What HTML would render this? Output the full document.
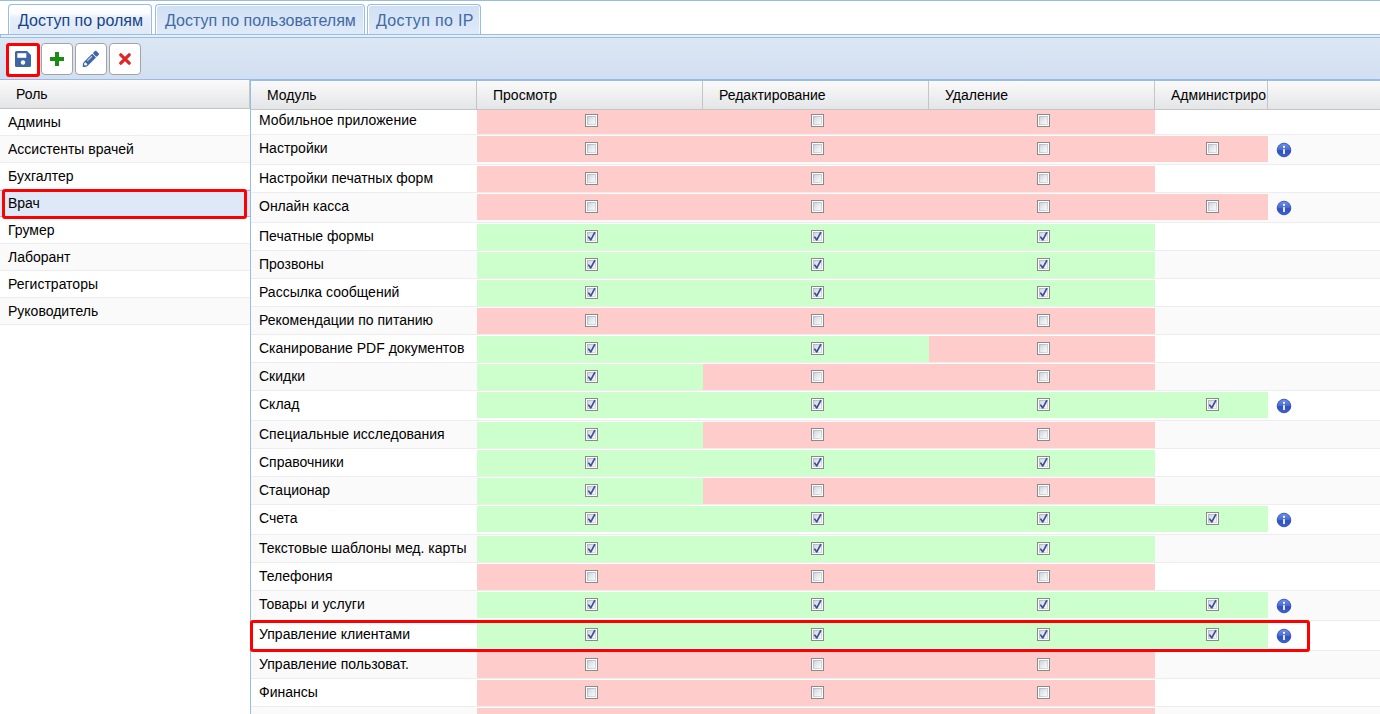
<!DOCTYPE html>
<html><head><meta charset="utf-8"><style>
*{box-sizing:border-box}
html,body{margin:0;padding:0;width:1380px;height:714px;overflow:hidden;background:#fff;font-family:"Liberation Sans",sans-serif;}
.a{position:absolute}
.t{position:absolute;font-size:14px;line-height:16px;color:#000;white-space:nowrap}
.tab{position:absolute;top:4px;height:31px;border:1px solid #99bbe8;border-bottom:none;border-radius:4px 4px 0 0;background:linear-gradient(#cfdff5,#e0ebf9);box-shadow:inset 1px 1px 0 #fff,inset -1px 0 0 #f4f8fd}
.tab.act{background:linear-gradient(#ffffff 0,#fbfcfe 8px,#e6eef9 13px,#dfe9f7 100%)}
.tabt{position:absolute;top:0;font-size:16px;line-height:18px;white-space:nowrap;color:#416aa3}
.btn{position:absolute;top:43px;width:32px;height:32px;border:1px solid #a3a3a3;border-radius:4px;background:#fff}
.hd{position:absolute;background:linear-gradient(#fafafa,#e4e5e7)}
.sep{position:absolute;width:1px;background:#c5c5c5}
.row{position:absolute;border-bottom:1px solid #ededed}
.alt{background:#fafafa}
.cell{position:absolute}
.r{background:#ffcccc}
.g{background:#ccffcc}
.cb{position:absolute;width:13px;height:13px}
.cb svg{display:block}
.ic{position:absolute;width:16px;height:16px}
.ic svg{display:block}
</style></head><body>
<svg width="0" height="0" style="position:absolute"><defs>
<linearGradient id="cbs" x1="0" y1="0" x2="1" y2="1"><stop offset="0" stop-color="#b4bac4"/><stop offset="1" stop-color="#dcdfe3"/></linearGradient>
<linearGradient id="cbg" x1="0" y1="0" x2="1" y2="1"><stop offset="0" stop-color="#cdd3dc"/><stop offset="0.6" stop-color="#eceef0"/><stop offset="1" stop-color="#f8f8f8"/></linearGradient>
<linearGradient id="ig" x1="0" y1="0" x2="0" y2="1"><stop offset="0" stop-color="#6f8fe8"/><stop offset="0.45" stop-color="#4a6fd8"/><stop offset="0.55" stop-color="#2f52c4"/><stop offset="1" stop-color="#3a62d8"/></linearGradient>
</defs></svg>

<div class="a" style="left:0;top:0;width:1380px;height:1px;background:#99bbe8"></div>
<div class="tab act" style="left:8px;width:144px"><div class="tabt" style="left:9px;top:7px;color:#15428b">Доступ по ролям</div></div>
<div class="tab" style="left:155px;width:210px"><div class="tabt" style="left:9px;top:7px">Доступ по пользователям</div></div>
<div class="tab" style="left:367px;width:114px"><div class="tabt" style="left:8px;top:7px;letter-spacing:0.35px">Доступ по IP</div></div>
<div class="a" style="left:0;top:34px;width:1380px;height:4px;background:#e7f0fb;border-top:1px solid #99bbe8;border-bottom:1px solid #99bbe8;border-left:1px solid #99bbe8"></div>
<div class="a" style="left:0;top:38px;width:1380px;height:41px;background:linear-gradient(#dce7f5,#d2dff0)"></div>
<div class="a" style="left:0;top:79px;width:1380px;height:1px;background:#99bbe8"></div>
<div class="btn" style="left:7px"></div>
<div class="btn" style="left:41px"></div>
<div class="btn" style="left:75px"></div>
<div class="btn" style="left:109px"></div>
<svg class="a" style="left:15px;top:51px" width="16" height="16" viewBox="0 0 16 16"><path d="M1.5 0 H12 L16 4 V14.5 A1.5 1.5 0 0 1 14.5 16 H1.5 A1.5 1.5 0 0 1 0 14.5 V1.5 A1.5 1.5 0 0 1 1.5 0Z" fill="#3e65a6"/><rect x="2.3" y="2.2" width="9" height="4.6" fill="#fff"/><circle cx="8" cy="11.5" r="2.2" fill="#fff"/></svg>
<svg class="a" style="left:50px;top:52px" width="14" height="14" viewBox="0 0 14 14"><rect x="5" y="0" width="4" height="14" fill="#1b8c14"/><rect x="0" y="5" width="14" height="4" fill="#1b8c14"/></svg>
<svg class="a" style="left:83px;top:51px;overflow:visible" width="16" height="16" viewBox="0 0 16 16"><g transform="rotate(-45 8 8)"><path d="M-3.4 7.75 Q-1.2 5.0 0.9 5.0 H12.6 V10.5 H0.9 Q-1.2 10.5 -3.4 7.75Z" fill="#3e65a6"/><path d="M13.3 6.2 A1.1 1.1 0 0 1 14.4 5.1 H16.3 A1.1 1.1 0 0 1 17.4 6.2 V9.4 A1.1 1.1 0 0 1 16.3 10.5 H14.4 A1.1 1.1 0 0 1 13.3 9.4Z" fill="#3e65a6"/><rect x="4" y="6.15" width="6.6" height="1.1" fill="#c9d5ea"/><path d="M-1.3 7.7 L0.1 6.3 H1.7 V9.2 H0.1 Z" fill="#fff"/></g></svg>
<svg class="a" style="left:119px;top:53px" width="12" height="12" viewBox="0 0 12 12"><path d="M1.8 1.8 L10.2 10.2 M10.2 1.8 L1.8 10.2" stroke="#e02323" stroke-width="3.2" stroke-linecap="round"/></svg>
<div class="a" style="left:6px;top:43px;width:34px;height:34px;border:3px solid #ff0000;border-radius:3px"></div>
<div class="hd" style="left:0;top:80px;width:249px;height:28px"></div>
<div class="a" style="left:0;top:108px;width:250px;height:1px;background:#c5c5c5"></div>
<div class="a" style="left:249px;top:80px;width:1px;height:28px;background:#c5c5c5"></div>
<div class="t" style="left:16px;top:86px">Роль</div>
<div class="row" style="left:0;top:109px;width:250px;height:27px;"></div>
<div class="t" style="left:8px;top:114px">Админы</div>
<div class="row alt" style="left:0;top:136px;width:250px;height:27px;"></div>
<div class="t" style="left:8px;top:141px">Ассистенты врачей</div>
<div class="row" style="left:0;top:163px;width:250px;height:27px;"></div>
<div class="t" style="left:8px;top:168px">Бухгалтер</div>
<div class="row alt" style="left:0;top:190px;width:250px;height:27px;background:#dfe8f6;border-top:1px solid #99bbe8;border-bottom:1px solid #99bbe8;"></div>
<div class="t" style="left:8px;top:195px">Врач</div>
<div class="row" style="left:0;top:217px;width:250px;height:27px;"></div>
<div class="t" style="left:8px;top:222px">Грумер</div>
<div class="row alt" style="left:0;top:244px;width:250px;height:27px;"></div>
<div class="t" style="left:8px;top:249px">Лаборант</div>
<div class="row" style="left:0;top:271px;width:250px;height:27px;"></div>
<div class="t" style="left:8px;top:276px">Регистраторы</div>
<div class="row alt" style="left:0;top:298px;width:250px;height:27px;"></div>
<div class="t" style="left:8px;top:303px">Руководитель</div>
<div class="a" style="left:2px;top:189px;width:245px;height:30px;border:3px solid #ff0000;border-radius:3px"></div>
<div class="a" style="left:250px;top:79px;width:1px;height:635px;background:#99bbe8"></div>
<div class="a" style="left:250px;top:80px;width:1130px;height:1px;background:#99bbe8"></div>
<div class="hd" style="left:251px;top:81px;width:1129px;height:28px"></div>
<div class="a" style="left:251px;top:109px;width:1129px;height:1px;background:#c5c5c5"></div>
<div class="sep" style="left:476px;top:81px;height:28px"></div>
<div class="sep" style="left:702px;top:81px;height:28px"></div>
<div class="sep" style="left:928px;top:81px;height:28px"></div>
<div class="sep" style="left:1154px;top:81px;height:28px"></div>
<div class="sep" style="left:1267px;top:81px;height:28px"></div>
<div class="t" style="left:267px;top:87px">Модуль</div>
<div class="t" style="left:493px;top:87px">Просмотр</div>
<div class="t" style="left:719px;top:87px">Редактирование</div>
<div class="t" style="left:945px;top:87px">Удаление</div>
<div class="t" style="left:1171px;top:87px;width:96px;overflow:hidden">Администриро</div>
<div class="row" style="left:251px;top:110px;width:1129px;height:25px"></div>
<div class="cell r" style="left:477px;top:110px;width:226px;height:24px"></div>
<div class="cb" style="left:585px;top:114px"><svg width="13" height="13" viewBox="0 0 13 13"><rect x="0.5" y="0.5" width="12" height="12" fill="#fff" stroke="#8a8a8a"/><rect x="2.5" y="2.5" width="8" height="8" fill="url(#cbg)" stroke="url(#cbs)" stroke-width="1"/></svg></div>
<div class="cell r" style="left:703px;top:110px;width:226px;height:24px"></div>
<div class="cb" style="left:811px;top:114px"><svg width="13" height="13" viewBox="0 0 13 13"><rect x="0.5" y="0.5" width="12" height="12" fill="#fff" stroke="#8a8a8a"/><rect x="2.5" y="2.5" width="8" height="8" fill="url(#cbg)" stroke="url(#cbs)" stroke-width="1"/></svg></div>
<div class="cell r" style="left:929px;top:110px;width:226px;height:24px"></div>
<div class="cb" style="left:1037px;top:114px"><svg width="13" height="13" viewBox="0 0 13 13"><rect x="0.5" y="0.5" width="12" height="12" fill="#fff" stroke="#8a8a8a"/><rect x="2.5" y="2.5" width="8" height="8" fill="url(#cbg)" stroke="url(#cbs)" stroke-width="1"/></svg></div>
<div class="t" style="left:259px;top:112px">Мобильное приложение</div>
<div class="row alt" style="left:251px;top:135px;width:1129px;height:30px"></div>
<div class="cell r" style="left:477px;top:136px;width:226px;height:26px"></div>
<div class="cb" style="left:585px;top:142px"><svg width="13" height="13" viewBox="0 0 13 13"><rect x="0.5" y="0.5" width="12" height="12" fill="#fff" stroke="#8a8a8a"/><rect x="2.5" y="2.5" width="8" height="8" fill="url(#cbg)" stroke="url(#cbs)" stroke-width="1"/></svg></div>
<div class="cell r" style="left:703px;top:136px;width:226px;height:26px"></div>
<div class="cb" style="left:811px;top:142px"><svg width="13" height="13" viewBox="0 0 13 13"><rect x="0.5" y="0.5" width="12" height="12" fill="#fff" stroke="#8a8a8a"/><rect x="2.5" y="2.5" width="8" height="8" fill="url(#cbg)" stroke="url(#cbs)" stroke-width="1"/></svg></div>
<div class="cell r" style="left:929px;top:136px;width:226px;height:26px"></div>
<div class="cb" style="left:1037px;top:142px"><svg width="13" height="13" viewBox="0 0 13 13"><rect x="0.5" y="0.5" width="12" height="12" fill="#fff" stroke="#8a8a8a"/><rect x="2.5" y="2.5" width="8" height="8" fill="url(#cbg)" stroke="url(#cbs)" stroke-width="1"/></svg></div>
<div class="cell r" style="left:1155px;top:136px;width:113px;height:26px"></div>
<div class="cb" style="left:1206px;top:142px"><svg width="13" height="13" viewBox="0 0 13 13"><rect x="0.5" y="0.5" width="12" height="12" fill="#fff" stroke="#8a8a8a"/><rect x="2.5" y="2.5" width="8" height="8" fill="url(#cbg)" stroke="url(#cbs)" stroke-width="1"/></svg></div>
<div class="t" style="left:259px;top:140px">Настройки</div>
<div class="ic" style="left:1276px;top:142px"><svg width="16" height="16" viewBox="0 0 16 16"><circle cx="8" cy="8" r="6.8" fill="url(#ig)" stroke="#2841a6" stroke-width="0.8"/><rect x="7" y="3.9" width="2" height="1.9" fill="#fff"/><rect x="7" y="7.1" width="2" height="4.9" fill="#ebe6da"/></svg></div>
<div class="row" style="left:251px;top:165px;width:1129px;height:28px"></div>
<div class="cell r" style="left:477px;top:166px;width:226px;height:26px"></div>
<div class="cb" style="left:585px;top:172px"><svg width="13" height="13" viewBox="0 0 13 13"><rect x="0.5" y="0.5" width="12" height="12" fill="#fff" stroke="#8a8a8a"/><rect x="2.5" y="2.5" width="8" height="8" fill="url(#cbg)" stroke="url(#cbs)" stroke-width="1"/></svg></div>
<div class="cell r" style="left:703px;top:166px;width:226px;height:26px"></div>
<div class="cb" style="left:811px;top:172px"><svg width="13" height="13" viewBox="0 0 13 13"><rect x="0.5" y="0.5" width="12" height="12" fill="#fff" stroke="#8a8a8a"/><rect x="2.5" y="2.5" width="8" height="8" fill="url(#cbg)" stroke="url(#cbs)" stroke-width="1"/></svg></div>
<div class="cell r" style="left:929px;top:166px;width:226px;height:26px"></div>
<div class="cb" style="left:1037px;top:172px"><svg width="13" height="13" viewBox="0 0 13 13"><rect x="0.5" y="0.5" width="12" height="12" fill="#fff" stroke="#8a8a8a"/><rect x="2.5" y="2.5" width="8" height="8" fill="url(#cbg)" stroke="url(#cbs)" stroke-width="1"/></svg></div>
<div class="t" style="left:259px;top:170px">Настройки печатных форм</div>
<div class="row alt" style="left:251px;top:193px;width:1129px;height:30px"></div>
<div class="cell r" style="left:477px;top:194px;width:226px;height:26px"></div>
<div class="cb" style="left:585px;top:200px"><svg width="13" height="13" viewBox="0 0 13 13"><rect x="0.5" y="0.5" width="12" height="12" fill="#fff" stroke="#8a8a8a"/><rect x="2.5" y="2.5" width="8" height="8" fill="url(#cbg)" stroke="url(#cbs)" stroke-width="1"/></svg></div>
<div class="cell r" style="left:703px;top:194px;width:226px;height:26px"></div>
<div class="cb" style="left:811px;top:200px"><svg width="13" height="13" viewBox="0 0 13 13"><rect x="0.5" y="0.5" width="12" height="12" fill="#fff" stroke="#8a8a8a"/><rect x="2.5" y="2.5" width="8" height="8" fill="url(#cbg)" stroke="url(#cbs)" stroke-width="1"/></svg></div>
<div class="cell r" style="left:929px;top:194px;width:226px;height:26px"></div>
<div class="cb" style="left:1037px;top:200px"><svg width="13" height="13" viewBox="0 0 13 13"><rect x="0.5" y="0.5" width="12" height="12" fill="#fff" stroke="#8a8a8a"/><rect x="2.5" y="2.5" width="8" height="8" fill="url(#cbg)" stroke="url(#cbs)" stroke-width="1"/></svg></div>
<div class="cell r" style="left:1155px;top:194px;width:113px;height:26px"></div>
<div class="cb" style="left:1206px;top:200px"><svg width="13" height="13" viewBox="0 0 13 13"><rect x="0.5" y="0.5" width="12" height="12" fill="#fff" stroke="#8a8a8a"/><rect x="2.5" y="2.5" width="8" height="8" fill="url(#cbg)" stroke="url(#cbs)" stroke-width="1"/></svg></div>
<div class="t" style="left:259px;top:198px">Онлайн касса</div>
<div class="ic" style="left:1276px;top:200px"><svg width="16" height="16" viewBox="0 0 16 16"><circle cx="8" cy="8" r="6.8" fill="url(#ig)" stroke="#2841a6" stroke-width="0.8"/><rect x="7" y="3.9" width="2" height="1.9" fill="#fff"/><rect x="7" y="7.1" width="2" height="4.9" fill="#ebe6da"/></svg></div>
<div class="row" style="left:251px;top:223px;width:1129px;height:28px"></div>
<div class="cell g" style="left:477px;top:224px;width:226px;height:26px"></div>
<div class="cb" style="left:585px;top:230px"><svg width="13" height="13" viewBox="0 0 13 13"><rect x="0.5" y="0.5" width="12" height="12" fill="#fff" stroke="#8a8a8a"/><rect x="2.5" y="2.5" width="8" height="8" fill="url(#cbg)" stroke="url(#cbs)" stroke-width="1"/><path d="M3.8 7.3 L5.8 9.9 L9.7 2.7" fill="none" stroke="#3a539c" stroke-width="1.75" stroke-linecap="round" stroke-linejoin="round"/></svg></div>
<div class="cell g" style="left:703px;top:224px;width:226px;height:26px"></div>
<div class="cb" style="left:811px;top:230px"><svg width="13" height="13" viewBox="0 0 13 13"><rect x="0.5" y="0.5" width="12" height="12" fill="#fff" stroke="#8a8a8a"/><rect x="2.5" y="2.5" width="8" height="8" fill="url(#cbg)" stroke="url(#cbs)" stroke-width="1"/><path d="M3.8 7.3 L5.8 9.9 L9.7 2.7" fill="none" stroke="#3a539c" stroke-width="1.75" stroke-linecap="round" stroke-linejoin="round"/></svg></div>
<div class="cell g" style="left:929px;top:224px;width:226px;height:26px"></div>
<div class="cb" style="left:1037px;top:230px"><svg width="13" height="13" viewBox="0 0 13 13"><rect x="0.5" y="0.5" width="12" height="12" fill="#fff" stroke="#8a8a8a"/><rect x="2.5" y="2.5" width="8" height="8" fill="url(#cbg)" stroke="url(#cbs)" stroke-width="1"/><path d="M3.8 7.3 L5.8 9.9 L9.7 2.7" fill="none" stroke="#3a539c" stroke-width="1.75" stroke-linecap="round" stroke-linejoin="round"/></svg></div>
<div class="t" style="left:259px;top:228px">Печатные формы</div>
<div class="row alt" style="left:251px;top:251px;width:1129px;height:28px"></div>
<div class="cell g" style="left:477px;top:252px;width:226px;height:26px"></div>
<div class="cb" style="left:585px;top:258px"><svg width="13" height="13" viewBox="0 0 13 13"><rect x="0.5" y="0.5" width="12" height="12" fill="#fff" stroke="#8a8a8a"/><rect x="2.5" y="2.5" width="8" height="8" fill="url(#cbg)" stroke="url(#cbs)" stroke-width="1"/><path d="M3.8 7.3 L5.8 9.9 L9.7 2.7" fill="none" stroke="#3a539c" stroke-width="1.75" stroke-linecap="round" stroke-linejoin="round"/></svg></div>
<div class="cell g" style="left:703px;top:252px;width:226px;height:26px"></div>
<div class="cb" style="left:811px;top:258px"><svg width="13" height="13" viewBox="0 0 13 13"><rect x="0.5" y="0.5" width="12" height="12" fill="#fff" stroke="#8a8a8a"/><rect x="2.5" y="2.5" width="8" height="8" fill="url(#cbg)" stroke="url(#cbs)" stroke-width="1"/><path d="M3.8 7.3 L5.8 9.9 L9.7 2.7" fill="none" stroke="#3a539c" stroke-width="1.75" stroke-linecap="round" stroke-linejoin="round"/></svg></div>
<div class="cell g" style="left:929px;top:252px;width:226px;height:26px"></div>
<div class="cb" style="left:1037px;top:258px"><svg width="13" height="13" viewBox="0 0 13 13"><rect x="0.5" y="0.5" width="12" height="12" fill="#fff" stroke="#8a8a8a"/><rect x="2.5" y="2.5" width="8" height="8" fill="url(#cbg)" stroke="url(#cbs)" stroke-width="1"/><path d="M3.8 7.3 L5.8 9.9 L9.7 2.7" fill="none" stroke="#3a539c" stroke-width="1.75" stroke-linecap="round" stroke-linejoin="round"/></svg></div>
<div class="t" style="left:259px;top:256px">Прозвоны</div>
<div class="row" style="left:251px;top:279px;width:1129px;height:28px"></div>
<div class="cell g" style="left:477px;top:280px;width:226px;height:26px"></div>
<div class="cb" style="left:585px;top:286px"><svg width="13" height="13" viewBox="0 0 13 13"><rect x="0.5" y="0.5" width="12" height="12" fill="#fff" stroke="#8a8a8a"/><rect x="2.5" y="2.5" width="8" height="8" fill="url(#cbg)" stroke="url(#cbs)" stroke-width="1"/><path d="M3.8 7.3 L5.8 9.9 L9.7 2.7" fill="none" stroke="#3a539c" stroke-width="1.75" stroke-linecap="round" stroke-linejoin="round"/></svg></div>
<div class="cell g" style="left:703px;top:280px;width:226px;height:26px"></div>
<div class="cb" style="left:811px;top:286px"><svg width="13" height="13" viewBox="0 0 13 13"><rect x="0.5" y="0.5" width="12" height="12" fill="#fff" stroke="#8a8a8a"/><rect x="2.5" y="2.5" width="8" height="8" fill="url(#cbg)" stroke="url(#cbs)" stroke-width="1"/><path d="M3.8 7.3 L5.8 9.9 L9.7 2.7" fill="none" stroke="#3a539c" stroke-width="1.75" stroke-linecap="round" stroke-linejoin="round"/></svg></div>
<div class="cell g" style="left:929px;top:280px;width:226px;height:26px"></div>
<div class="cb" style="left:1037px;top:286px"><svg width="13" height="13" viewBox="0 0 13 13"><rect x="0.5" y="0.5" width="12" height="12" fill="#fff" stroke="#8a8a8a"/><rect x="2.5" y="2.5" width="8" height="8" fill="url(#cbg)" stroke="url(#cbs)" stroke-width="1"/><path d="M3.8 7.3 L5.8 9.9 L9.7 2.7" fill="none" stroke="#3a539c" stroke-width="1.75" stroke-linecap="round" stroke-linejoin="round"/></svg></div>
<div class="t" style="left:259px;top:284px">Рассылка сообщений</div>
<div class="row alt" style="left:251px;top:307px;width:1129px;height:28px"></div>
<div class="cell r" style="left:477px;top:308px;width:226px;height:26px"></div>
<div class="cb" style="left:585px;top:314px"><svg width="13" height="13" viewBox="0 0 13 13"><rect x="0.5" y="0.5" width="12" height="12" fill="#fff" stroke="#8a8a8a"/><rect x="2.5" y="2.5" width="8" height="8" fill="url(#cbg)" stroke="url(#cbs)" stroke-width="1"/></svg></div>
<div class="cell r" style="left:703px;top:308px;width:226px;height:26px"></div>
<div class="cb" style="left:811px;top:314px"><svg width="13" height="13" viewBox="0 0 13 13"><rect x="0.5" y="0.5" width="12" height="12" fill="#fff" stroke="#8a8a8a"/><rect x="2.5" y="2.5" width="8" height="8" fill="url(#cbg)" stroke="url(#cbs)" stroke-width="1"/></svg></div>
<div class="cell r" style="left:929px;top:308px;width:226px;height:26px"></div>
<div class="cb" style="left:1037px;top:314px"><svg width="13" height="13" viewBox="0 0 13 13"><rect x="0.5" y="0.5" width="12" height="12" fill="#fff" stroke="#8a8a8a"/><rect x="2.5" y="2.5" width="8" height="8" fill="url(#cbg)" stroke="url(#cbs)" stroke-width="1"/></svg></div>
<div class="t" style="left:259px;top:312px">Рекомендации по питанию</div>
<div class="row" style="left:251px;top:335px;width:1129px;height:28px"></div>
<div class="cell g" style="left:477px;top:336px;width:226px;height:26px"></div>
<div class="cb" style="left:585px;top:342px"><svg width="13" height="13" viewBox="0 0 13 13"><rect x="0.5" y="0.5" width="12" height="12" fill="#fff" stroke="#8a8a8a"/><rect x="2.5" y="2.5" width="8" height="8" fill="url(#cbg)" stroke="url(#cbs)" stroke-width="1"/><path d="M3.8 7.3 L5.8 9.9 L9.7 2.7" fill="none" stroke="#3a539c" stroke-width="1.75" stroke-linecap="round" stroke-linejoin="round"/></svg></div>
<div class="cell g" style="left:703px;top:336px;width:226px;height:26px"></div>
<div class="cb" style="left:811px;top:342px"><svg width="13" height="13" viewBox="0 0 13 13"><rect x="0.5" y="0.5" width="12" height="12" fill="#fff" stroke="#8a8a8a"/><rect x="2.5" y="2.5" width="8" height="8" fill="url(#cbg)" stroke="url(#cbs)" stroke-width="1"/><path d="M3.8 7.3 L5.8 9.9 L9.7 2.7" fill="none" stroke="#3a539c" stroke-width="1.75" stroke-linecap="round" stroke-linejoin="round"/></svg></div>
<div class="cell r" style="left:929px;top:336px;width:226px;height:26px"></div>
<div class="cb" style="left:1037px;top:342px"><svg width="13" height="13" viewBox="0 0 13 13"><rect x="0.5" y="0.5" width="12" height="12" fill="#fff" stroke="#8a8a8a"/><rect x="2.5" y="2.5" width="8" height="8" fill="url(#cbg)" stroke="url(#cbs)" stroke-width="1"/></svg></div>
<div class="t" style="left:259px;top:340px">Сканирование PDF документов</div>
<div class="row alt" style="left:251px;top:363px;width:1129px;height:28px"></div>
<div class="cell g" style="left:477px;top:364px;width:226px;height:26px"></div>
<div class="cb" style="left:585px;top:370px"><svg width="13" height="13" viewBox="0 0 13 13"><rect x="0.5" y="0.5" width="12" height="12" fill="#fff" stroke="#8a8a8a"/><rect x="2.5" y="2.5" width="8" height="8" fill="url(#cbg)" stroke="url(#cbs)" stroke-width="1"/><path d="M3.8 7.3 L5.8 9.9 L9.7 2.7" fill="none" stroke="#3a539c" stroke-width="1.75" stroke-linecap="round" stroke-linejoin="round"/></svg></div>
<div class="cell r" style="left:703px;top:364px;width:226px;height:26px"></div>
<div class="cb" style="left:811px;top:370px"><svg width="13" height="13" viewBox="0 0 13 13"><rect x="0.5" y="0.5" width="12" height="12" fill="#fff" stroke="#8a8a8a"/><rect x="2.5" y="2.5" width="8" height="8" fill="url(#cbg)" stroke="url(#cbs)" stroke-width="1"/></svg></div>
<div class="cell r" style="left:929px;top:364px;width:226px;height:26px"></div>
<div class="cb" style="left:1037px;top:370px"><svg width="13" height="13" viewBox="0 0 13 13"><rect x="0.5" y="0.5" width="12" height="12" fill="#fff" stroke="#8a8a8a"/><rect x="2.5" y="2.5" width="8" height="8" fill="url(#cbg)" stroke="url(#cbs)" stroke-width="1"/></svg></div>
<div class="t" style="left:259px;top:368px">Скидки</div>
<div class="row" style="left:251px;top:391px;width:1129px;height:30px"></div>
<div class="cell g" style="left:477px;top:392px;width:226px;height:26px"></div>
<div class="cb" style="left:585px;top:398px"><svg width="13" height="13" viewBox="0 0 13 13"><rect x="0.5" y="0.5" width="12" height="12" fill="#fff" stroke="#8a8a8a"/><rect x="2.5" y="2.5" width="8" height="8" fill="url(#cbg)" stroke="url(#cbs)" stroke-width="1"/><path d="M3.8 7.3 L5.8 9.9 L9.7 2.7" fill="none" stroke="#3a539c" stroke-width="1.75" stroke-linecap="round" stroke-linejoin="round"/></svg></div>
<div class="cell g" style="left:703px;top:392px;width:226px;height:26px"></div>
<div class="cb" style="left:811px;top:398px"><svg width="13" height="13" viewBox="0 0 13 13"><rect x="0.5" y="0.5" width="12" height="12" fill="#fff" stroke="#8a8a8a"/><rect x="2.5" y="2.5" width="8" height="8" fill="url(#cbg)" stroke="url(#cbs)" stroke-width="1"/><path d="M3.8 7.3 L5.8 9.9 L9.7 2.7" fill="none" stroke="#3a539c" stroke-width="1.75" stroke-linecap="round" stroke-linejoin="round"/></svg></div>
<div class="cell g" style="left:929px;top:392px;width:226px;height:26px"></div>
<div class="cb" style="left:1037px;top:398px"><svg width="13" height="13" viewBox="0 0 13 13"><rect x="0.5" y="0.5" width="12" height="12" fill="#fff" stroke="#8a8a8a"/><rect x="2.5" y="2.5" width="8" height="8" fill="url(#cbg)" stroke="url(#cbs)" stroke-width="1"/><path d="M3.8 7.3 L5.8 9.9 L9.7 2.7" fill="none" stroke="#3a539c" stroke-width="1.75" stroke-linecap="round" stroke-linejoin="round"/></svg></div>
<div class="cell g" style="left:1155px;top:392px;width:113px;height:26px"></div>
<div class="cb" style="left:1206px;top:398px"><svg width="13" height="13" viewBox="0 0 13 13"><rect x="0.5" y="0.5" width="12" height="12" fill="#fff" stroke="#8a8a8a"/><rect x="2.5" y="2.5" width="8" height="8" fill="url(#cbg)" stroke="url(#cbs)" stroke-width="1"/><path d="M3.8 7.3 L5.8 9.9 L9.7 2.7" fill="none" stroke="#3a539c" stroke-width="1.75" stroke-linecap="round" stroke-linejoin="round"/></svg></div>
<div class="t" style="left:259px;top:396px">Склад</div>
<div class="ic" style="left:1276px;top:398px"><svg width="16" height="16" viewBox="0 0 16 16"><circle cx="8" cy="8" r="6.8" fill="url(#ig)" stroke="#2841a6" stroke-width="0.8"/><rect x="7" y="3.9" width="2" height="1.9" fill="#fff"/><rect x="7" y="7.1" width="2" height="4.9" fill="#ebe6da"/></svg></div>
<div class="row alt" style="left:251px;top:421px;width:1129px;height:28px"></div>
<div class="cell g" style="left:477px;top:422px;width:226px;height:26px"></div>
<div class="cb" style="left:585px;top:428px"><svg width="13" height="13" viewBox="0 0 13 13"><rect x="0.5" y="0.5" width="12" height="12" fill="#fff" stroke="#8a8a8a"/><rect x="2.5" y="2.5" width="8" height="8" fill="url(#cbg)" stroke="url(#cbs)" stroke-width="1"/><path d="M3.8 7.3 L5.8 9.9 L9.7 2.7" fill="none" stroke="#3a539c" stroke-width="1.75" stroke-linecap="round" stroke-linejoin="round"/></svg></div>
<div class="cell r" style="left:703px;top:422px;width:226px;height:26px"></div>
<div class="cb" style="left:811px;top:428px"><svg width="13" height="13" viewBox="0 0 13 13"><rect x="0.5" y="0.5" width="12" height="12" fill="#fff" stroke="#8a8a8a"/><rect x="2.5" y="2.5" width="8" height="8" fill="url(#cbg)" stroke="url(#cbs)" stroke-width="1"/></svg></div>
<div class="cell r" style="left:929px;top:422px;width:226px;height:26px"></div>
<div class="cb" style="left:1037px;top:428px"><svg width="13" height="13" viewBox="0 0 13 13"><rect x="0.5" y="0.5" width="12" height="12" fill="#fff" stroke="#8a8a8a"/><rect x="2.5" y="2.5" width="8" height="8" fill="url(#cbg)" stroke="url(#cbs)" stroke-width="1"/></svg></div>
<div class="t" style="left:259px;top:426px">Специальные исследования</div>
<div class="row" style="left:251px;top:449px;width:1129px;height:28px"></div>
<div class="cell g" style="left:477px;top:450px;width:226px;height:26px"></div>
<div class="cb" style="left:585px;top:456px"><svg width="13" height="13" viewBox="0 0 13 13"><rect x="0.5" y="0.5" width="12" height="12" fill="#fff" stroke="#8a8a8a"/><rect x="2.5" y="2.5" width="8" height="8" fill="url(#cbg)" stroke="url(#cbs)" stroke-width="1"/><path d="M3.8 7.3 L5.8 9.9 L9.7 2.7" fill="none" stroke="#3a539c" stroke-width="1.75" stroke-linecap="round" stroke-linejoin="round"/></svg></div>
<div class="cell g" style="left:703px;top:450px;width:226px;height:26px"></div>
<div class="cb" style="left:811px;top:456px"><svg width="13" height="13" viewBox="0 0 13 13"><rect x="0.5" y="0.5" width="12" height="12" fill="#fff" stroke="#8a8a8a"/><rect x="2.5" y="2.5" width="8" height="8" fill="url(#cbg)" stroke="url(#cbs)" stroke-width="1"/><path d="M3.8 7.3 L5.8 9.9 L9.7 2.7" fill="none" stroke="#3a539c" stroke-width="1.75" stroke-linecap="round" stroke-linejoin="round"/></svg></div>
<div class="cell g" style="left:929px;top:450px;width:226px;height:26px"></div>
<div class="cb" style="left:1037px;top:456px"><svg width="13" height="13" viewBox="0 0 13 13"><rect x="0.5" y="0.5" width="12" height="12" fill="#fff" stroke="#8a8a8a"/><rect x="2.5" y="2.5" width="8" height="8" fill="url(#cbg)" stroke="url(#cbs)" stroke-width="1"/><path d="M3.8 7.3 L5.8 9.9 L9.7 2.7" fill="none" stroke="#3a539c" stroke-width="1.75" stroke-linecap="round" stroke-linejoin="round"/></svg></div>
<div class="t" style="left:259px;top:454px">Справочники</div>
<div class="row alt" style="left:251px;top:477px;width:1129px;height:28px"></div>
<div class="cell g" style="left:477px;top:478px;width:226px;height:26px"></div>
<div class="cb" style="left:585px;top:484px"><svg width="13" height="13" viewBox="0 0 13 13"><rect x="0.5" y="0.5" width="12" height="12" fill="#fff" stroke="#8a8a8a"/><rect x="2.5" y="2.5" width="8" height="8" fill="url(#cbg)" stroke="url(#cbs)" stroke-width="1"/><path d="M3.8 7.3 L5.8 9.9 L9.7 2.7" fill="none" stroke="#3a539c" stroke-width="1.75" stroke-linecap="round" stroke-linejoin="round"/></svg></div>
<div class="cell r" style="left:703px;top:478px;width:226px;height:26px"></div>
<div class="cb" style="left:811px;top:484px"><svg width="13" height="13" viewBox="0 0 13 13"><rect x="0.5" y="0.5" width="12" height="12" fill="#fff" stroke="#8a8a8a"/><rect x="2.5" y="2.5" width="8" height="8" fill="url(#cbg)" stroke="url(#cbs)" stroke-width="1"/></svg></div>
<div class="cell r" style="left:929px;top:478px;width:226px;height:26px"></div>
<div class="cb" style="left:1037px;top:484px"><svg width="13" height="13" viewBox="0 0 13 13"><rect x="0.5" y="0.5" width="12" height="12" fill="#fff" stroke="#8a8a8a"/><rect x="2.5" y="2.5" width="8" height="8" fill="url(#cbg)" stroke="url(#cbs)" stroke-width="1"/></svg></div>
<div class="t" style="left:259px;top:482px">Стационар</div>
<div class="row" style="left:251px;top:505px;width:1129px;height:30px"></div>
<div class="cell g" style="left:477px;top:506px;width:226px;height:26px"></div>
<div class="cb" style="left:585px;top:512px"><svg width="13" height="13" viewBox="0 0 13 13"><rect x="0.5" y="0.5" width="12" height="12" fill="#fff" stroke="#8a8a8a"/><rect x="2.5" y="2.5" width="8" height="8" fill="url(#cbg)" stroke="url(#cbs)" stroke-width="1"/><path d="M3.8 7.3 L5.8 9.9 L9.7 2.7" fill="none" stroke="#3a539c" stroke-width="1.75" stroke-linecap="round" stroke-linejoin="round"/></svg></div>
<div class="cell g" style="left:703px;top:506px;width:226px;height:26px"></div>
<div class="cb" style="left:811px;top:512px"><svg width="13" height="13" viewBox="0 0 13 13"><rect x="0.5" y="0.5" width="12" height="12" fill="#fff" stroke="#8a8a8a"/><rect x="2.5" y="2.5" width="8" height="8" fill="url(#cbg)" stroke="url(#cbs)" stroke-width="1"/><path d="M3.8 7.3 L5.8 9.9 L9.7 2.7" fill="none" stroke="#3a539c" stroke-width="1.75" stroke-linecap="round" stroke-linejoin="round"/></svg></div>
<div class="cell g" style="left:929px;top:506px;width:226px;height:26px"></div>
<div class="cb" style="left:1037px;top:512px"><svg width="13" height="13" viewBox="0 0 13 13"><rect x="0.5" y="0.5" width="12" height="12" fill="#fff" stroke="#8a8a8a"/><rect x="2.5" y="2.5" width="8" height="8" fill="url(#cbg)" stroke="url(#cbs)" stroke-width="1"/><path d="M3.8 7.3 L5.8 9.9 L9.7 2.7" fill="none" stroke="#3a539c" stroke-width="1.75" stroke-linecap="round" stroke-linejoin="round"/></svg></div>
<div class="cell g" style="left:1155px;top:506px;width:113px;height:26px"></div>
<div class="cb" style="left:1206px;top:512px"><svg width="13" height="13" viewBox="0 0 13 13"><rect x="0.5" y="0.5" width="12" height="12" fill="#fff" stroke="#8a8a8a"/><rect x="2.5" y="2.5" width="8" height="8" fill="url(#cbg)" stroke="url(#cbs)" stroke-width="1"/><path d="M3.8 7.3 L5.8 9.9 L9.7 2.7" fill="none" stroke="#3a539c" stroke-width="1.75" stroke-linecap="round" stroke-linejoin="round"/></svg></div>
<div class="t" style="left:259px;top:510px">Счета</div>
<div class="ic" style="left:1276px;top:512px"><svg width="16" height="16" viewBox="0 0 16 16"><circle cx="8" cy="8" r="6.8" fill="url(#ig)" stroke="#2841a6" stroke-width="0.8"/><rect x="7" y="3.9" width="2" height="1.9" fill="#fff"/><rect x="7" y="7.1" width="2" height="4.9" fill="#ebe6da"/></svg></div>
<div class="row alt" style="left:251px;top:535px;width:1129px;height:28px"></div>
<div class="cell g" style="left:477px;top:536px;width:226px;height:26px"></div>
<div class="cb" style="left:585px;top:542px"><svg width="13" height="13" viewBox="0 0 13 13"><rect x="0.5" y="0.5" width="12" height="12" fill="#fff" stroke="#8a8a8a"/><rect x="2.5" y="2.5" width="8" height="8" fill="url(#cbg)" stroke="url(#cbs)" stroke-width="1"/><path d="M3.8 7.3 L5.8 9.9 L9.7 2.7" fill="none" stroke="#3a539c" stroke-width="1.75" stroke-linecap="round" stroke-linejoin="round"/></svg></div>
<div class="cell g" style="left:703px;top:536px;width:226px;height:26px"></div>
<div class="cb" style="left:811px;top:542px"><svg width="13" height="13" viewBox="0 0 13 13"><rect x="0.5" y="0.5" width="12" height="12" fill="#fff" stroke="#8a8a8a"/><rect x="2.5" y="2.5" width="8" height="8" fill="url(#cbg)" stroke="url(#cbs)" stroke-width="1"/><path d="M3.8 7.3 L5.8 9.9 L9.7 2.7" fill="none" stroke="#3a539c" stroke-width="1.75" stroke-linecap="round" stroke-linejoin="round"/></svg></div>
<div class="cell g" style="left:929px;top:536px;width:226px;height:26px"></div>
<div class="cb" style="left:1037px;top:542px"><svg width="13" height="13" viewBox="0 0 13 13"><rect x="0.5" y="0.5" width="12" height="12" fill="#fff" stroke="#8a8a8a"/><rect x="2.5" y="2.5" width="8" height="8" fill="url(#cbg)" stroke="url(#cbs)" stroke-width="1"/><path d="M3.8 7.3 L5.8 9.9 L9.7 2.7" fill="none" stroke="#3a539c" stroke-width="1.75" stroke-linecap="round" stroke-linejoin="round"/></svg></div>
<div class="t" style="left:259px;top:540px">Текстовые шаблоны мед. карты</div>
<div class="row" style="left:251px;top:563px;width:1129px;height:28px"></div>
<div class="cell r" style="left:477px;top:564px;width:226px;height:26px"></div>
<div class="cb" style="left:585px;top:570px"><svg width="13" height="13" viewBox="0 0 13 13"><rect x="0.5" y="0.5" width="12" height="12" fill="#fff" stroke="#8a8a8a"/><rect x="2.5" y="2.5" width="8" height="8" fill="url(#cbg)" stroke="url(#cbs)" stroke-width="1"/></svg></div>
<div class="cell r" style="left:703px;top:564px;width:226px;height:26px"></div>
<div class="cb" style="left:811px;top:570px"><svg width="13" height="13" viewBox="0 0 13 13"><rect x="0.5" y="0.5" width="12" height="12" fill="#fff" stroke="#8a8a8a"/><rect x="2.5" y="2.5" width="8" height="8" fill="url(#cbg)" stroke="url(#cbs)" stroke-width="1"/></svg></div>
<div class="cell r" style="left:929px;top:564px;width:226px;height:26px"></div>
<div class="cb" style="left:1037px;top:570px"><svg width="13" height="13" viewBox="0 0 13 13"><rect x="0.5" y="0.5" width="12" height="12" fill="#fff" stroke="#8a8a8a"/><rect x="2.5" y="2.5" width="8" height="8" fill="url(#cbg)" stroke="url(#cbs)" stroke-width="1"/></svg></div>
<div class="t" style="left:259px;top:568px">Телефония</div>
<div class="row alt" style="left:251px;top:591px;width:1129px;height:30px"></div>
<div class="cell g" style="left:477px;top:592px;width:226px;height:26px"></div>
<div class="cb" style="left:585px;top:598px"><svg width="13" height="13" viewBox="0 0 13 13"><rect x="0.5" y="0.5" width="12" height="12" fill="#fff" stroke="#8a8a8a"/><rect x="2.5" y="2.5" width="8" height="8" fill="url(#cbg)" stroke="url(#cbs)" stroke-width="1"/><path d="M3.8 7.3 L5.8 9.9 L9.7 2.7" fill="none" stroke="#3a539c" stroke-width="1.75" stroke-linecap="round" stroke-linejoin="round"/></svg></div>
<div class="cell g" style="left:703px;top:592px;width:226px;height:26px"></div>
<div class="cb" style="left:811px;top:598px"><svg width="13" height="13" viewBox="0 0 13 13"><rect x="0.5" y="0.5" width="12" height="12" fill="#fff" stroke="#8a8a8a"/><rect x="2.5" y="2.5" width="8" height="8" fill="url(#cbg)" stroke="url(#cbs)" stroke-width="1"/><path d="M3.8 7.3 L5.8 9.9 L9.7 2.7" fill="none" stroke="#3a539c" stroke-width="1.75" stroke-linecap="round" stroke-linejoin="round"/></svg></div>
<div class="cell g" style="left:929px;top:592px;width:226px;height:26px"></div>
<div class="cb" style="left:1037px;top:598px"><svg width="13" height="13" viewBox="0 0 13 13"><rect x="0.5" y="0.5" width="12" height="12" fill="#fff" stroke="#8a8a8a"/><rect x="2.5" y="2.5" width="8" height="8" fill="url(#cbg)" stroke="url(#cbs)" stroke-width="1"/><path d="M3.8 7.3 L5.8 9.9 L9.7 2.7" fill="none" stroke="#3a539c" stroke-width="1.75" stroke-linecap="round" stroke-linejoin="round"/></svg></div>
<div class="cell g" style="left:1155px;top:592px;width:113px;height:26px"></div>
<div class="cb" style="left:1206px;top:598px"><svg width="13" height="13" viewBox="0 0 13 13"><rect x="0.5" y="0.5" width="12" height="12" fill="#fff" stroke="#8a8a8a"/><rect x="2.5" y="2.5" width="8" height="8" fill="url(#cbg)" stroke="url(#cbs)" stroke-width="1"/><path d="M3.8 7.3 L5.8 9.9 L9.7 2.7" fill="none" stroke="#3a539c" stroke-width="1.75" stroke-linecap="round" stroke-linejoin="round"/></svg></div>
<div class="t" style="left:259px;top:596px">Товары и услуги</div>
<div class="ic" style="left:1276px;top:598px"><svg width="16" height="16" viewBox="0 0 16 16"><circle cx="8" cy="8" r="6.8" fill="url(#ig)" stroke="#2841a6" stroke-width="0.8"/><rect x="7" y="3.9" width="2" height="1.9" fill="#fff"/><rect x="7" y="7.1" width="2" height="4.9" fill="#ebe6da"/></svg></div>
<div class="row" style="left:251px;top:621px;width:1129px;height:30px"></div>
<div class="cell g" style="left:477px;top:622px;width:226px;height:26px"></div>
<div class="cb" style="left:585px;top:628px"><svg width="13" height="13" viewBox="0 0 13 13"><rect x="0.5" y="0.5" width="12" height="12" fill="#fff" stroke="#8a8a8a"/><rect x="2.5" y="2.5" width="8" height="8" fill="url(#cbg)" stroke="url(#cbs)" stroke-width="1"/><path d="M3.8 7.3 L5.8 9.9 L9.7 2.7" fill="none" stroke="#3a539c" stroke-width="1.75" stroke-linecap="round" stroke-linejoin="round"/></svg></div>
<div class="cell g" style="left:703px;top:622px;width:226px;height:26px"></div>
<div class="cb" style="left:811px;top:628px"><svg width="13" height="13" viewBox="0 0 13 13"><rect x="0.5" y="0.5" width="12" height="12" fill="#fff" stroke="#8a8a8a"/><rect x="2.5" y="2.5" width="8" height="8" fill="url(#cbg)" stroke="url(#cbs)" stroke-width="1"/><path d="M3.8 7.3 L5.8 9.9 L9.7 2.7" fill="none" stroke="#3a539c" stroke-width="1.75" stroke-linecap="round" stroke-linejoin="round"/></svg></div>
<div class="cell g" style="left:929px;top:622px;width:226px;height:26px"></div>
<div class="cb" style="left:1037px;top:628px"><svg width="13" height="13" viewBox="0 0 13 13"><rect x="0.5" y="0.5" width="12" height="12" fill="#fff" stroke="#8a8a8a"/><rect x="2.5" y="2.5" width="8" height="8" fill="url(#cbg)" stroke="url(#cbs)" stroke-width="1"/><path d="M3.8 7.3 L5.8 9.9 L9.7 2.7" fill="none" stroke="#3a539c" stroke-width="1.75" stroke-linecap="round" stroke-linejoin="round"/></svg></div>
<div class="cell g" style="left:1155px;top:622px;width:113px;height:26px"></div>
<div class="cb" style="left:1206px;top:628px"><svg width="13" height="13" viewBox="0 0 13 13"><rect x="0.5" y="0.5" width="12" height="12" fill="#fff" stroke="#8a8a8a"/><rect x="2.5" y="2.5" width="8" height="8" fill="url(#cbg)" stroke="url(#cbs)" stroke-width="1"/><path d="M3.8 7.3 L5.8 9.9 L9.7 2.7" fill="none" stroke="#3a539c" stroke-width="1.75" stroke-linecap="round" stroke-linejoin="round"/></svg></div>
<div class="t" style="left:259px;top:626px">Управление клиентами</div>
<div class="ic" style="left:1276px;top:628px"><svg width="16" height="16" viewBox="0 0 16 16"><circle cx="8" cy="8" r="6.8" fill="url(#ig)" stroke="#2841a6" stroke-width="0.8"/><rect x="7" y="3.9" width="2" height="1.9" fill="#fff"/><rect x="7" y="7.1" width="2" height="4.9" fill="#ebe6da"/></svg></div>
<div class="row alt" style="left:251px;top:651px;width:1129px;height:28px"></div>
<div class="cell r" style="left:477px;top:652px;width:226px;height:26px"></div>
<div class="cb" style="left:585px;top:658px"><svg width="13" height="13" viewBox="0 0 13 13"><rect x="0.5" y="0.5" width="12" height="12" fill="#fff" stroke="#8a8a8a"/><rect x="2.5" y="2.5" width="8" height="8" fill="url(#cbg)" stroke="url(#cbs)" stroke-width="1"/></svg></div>
<div class="cell r" style="left:703px;top:652px;width:226px;height:26px"></div>
<div class="cb" style="left:811px;top:658px"><svg width="13" height="13" viewBox="0 0 13 13"><rect x="0.5" y="0.5" width="12" height="12" fill="#fff" stroke="#8a8a8a"/><rect x="2.5" y="2.5" width="8" height="8" fill="url(#cbg)" stroke="url(#cbs)" stroke-width="1"/></svg></div>
<div class="cell r" style="left:929px;top:652px;width:226px;height:26px"></div>
<div class="cb" style="left:1037px;top:658px"><svg width="13" height="13" viewBox="0 0 13 13"><rect x="0.5" y="0.5" width="12" height="12" fill="#fff" stroke="#8a8a8a"/><rect x="2.5" y="2.5" width="8" height="8" fill="url(#cbg)" stroke="url(#cbs)" stroke-width="1"/></svg></div>
<div class="t" style="left:259px;top:656px">Управление пользоват.</div>
<div class="row" style="left:251px;top:679px;width:1129px;height:28px"></div>
<div class="cell r" style="left:477px;top:680px;width:226px;height:26px"></div>
<div class="cb" style="left:585px;top:686px"><svg width="13" height="13" viewBox="0 0 13 13"><rect x="0.5" y="0.5" width="12" height="12" fill="#fff" stroke="#8a8a8a"/><rect x="2.5" y="2.5" width="8" height="8" fill="url(#cbg)" stroke="url(#cbs)" stroke-width="1"/></svg></div>
<div class="cell r" style="left:703px;top:680px;width:226px;height:26px"></div>
<div class="cb" style="left:811px;top:686px"><svg width="13" height="13" viewBox="0 0 13 13"><rect x="0.5" y="0.5" width="12" height="12" fill="#fff" stroke="#8a8a8a"/><rect x="2.5" y="2.5" width="8" height="8" fill="url(#cbg)" stroke="url(#cbs)" stroke-width="1"/></svg></div>
<div class="cell r" style="left:929px;top:680px;width:226px;height:26px"></div>
<div class="cb" style="left:1037px;top:686px"><svg width="13" height="13" viewBox="0 0 13 13"><rect x="0.5" y="0.5" width="12" height="12" fill="#fff" stroke="#8a8a8a"/><rect x="2.5" y="2.5" width="8" height="8" fill="url(#cbg)" stroke="url(#cbs)" stroke-width="1"/></svg></div>
<div class="t" style="left:259px;top:684px">Финансы</div>
<div class="row alt" style="left:251px;top:707px;width:1129px;height:28px"></div>
<div class="cell r" style="left:477px;top:708px;width:226px;height:26px"></div>
<div class="cb" style="left:585px;top:714px"><svg width="13" height="13" viewBox="0 0 13 13"><rect x="0.5" y="0.5" width="12" height="12" fill="#fff" stroke="#8a8a8a"/><rect x="2.5" y="2.5" width="8" height="8" fill="url(#cbg)" stroke="url(#cbs)" stroke-width="1"/></svg></div>
<div class="cell r" style="left:703px;top:708px;width:226px;height:26px"></div>
<div class="cb" style="left:811px;top:714px"><svg width="13" height="13" viewBox="0 0 13 13"><rect x="0.5" y="0.5" width="12" height="12" fill="#fff" stroke="#8a8a8a"/><rect x="2.5" y="2.5" width="8" height="8" fill="url(#cbg)" stroke="url(#cbs)" stroke-width="1"/></svg></div>
<div class="cell r" style="left:929px;top:708px;width:226px;height:26px"></div>
<div class="cb" style="left:1037px;top:714px"><svg width="13" height="13" viewBox="0 0 13 13"><rect x="0.5" y="0.5" width="12" height="12" fill="#fff" stroke="#8a8a8a"/><rect x="2.5" y="2.5" width="8" height="8" fill="url(#cbg)" stroke="url(#cbs)" stroke-width="1"/></svg></div>
<div class="a" style="left:250px;top:620px;width:1060px;height:32px;border:3px solid #ff0000;border-radius:3px"></div>
</body></html>
